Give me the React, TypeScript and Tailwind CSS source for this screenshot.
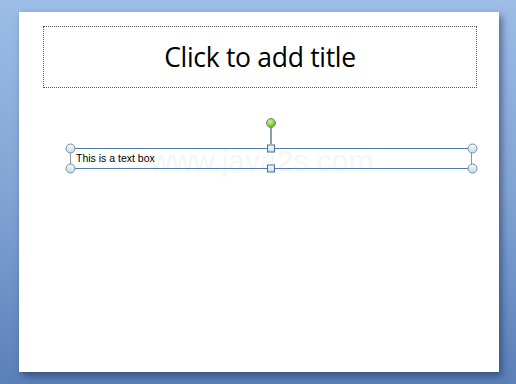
import React from "react";

function Circle({ cx, cy }: { cx: number; cy: number }) {
  return (
    <g>
      <circle cx={cx} cy={cy} r={4.5} fill="url(#hg)" stroke="#7c8a98" strokeWidth={1} />
    </g>
  );
}

function Square({ x, y }: { x: number; y: number }) {
  return <rect x={x - 3.5} y={y - 3.5} width={7} height={7} fill="url(#sg)" stroke="#4d6f96" strokeWidth={1} />;
}

export default function App() {
  return (
    <div
      className="w-[516px] h-[384px] overflow-hidden bg-[linear-gradient(180deg,#9dbde8_0%,#82a4d4_50%,#5a80b8_100%)] pt-[12px] pl-[19px]"
      style={{ fontFamily: '"Liberation Sans", Arial, sans-serif' }}
    >
      <div className="relative w-[480px] h-[360px] bg-white shadow-[3px_4px_7px_rgba(20,40,80,0.55)]">
        <div
          className="absolute left-[131px] top-[134px] text-[30px] leading-none text-[#f6f6f6] select-none"
          style={{ fontFamily: '"Liberation Sans", Arial, sans-serif' }}
        >
          www.java2s.com
        </div>
        <div className="relative ml-[24px] pt-[14px]">
          <div className="w-[434px] h-[62px] border border-dotted border-[#555] flex items-center justify-center">
            <span
              className="text-[26.5px] text-black leading-none"
              style={{ fontFamily: '"Open Sans", "Liberation Sans", sans-serif', letterSpacing: "-0.3px" }}
            >
              Click to add title
            </span>
          </div>
        </div>
        <div className="relative ml-[51px] mt-[60px] w-[402px] h-[21px] border-y border-[#4f7bb0] border-x border-x-[#8696a6]">
          <div className="pl-[5px] pt-[3px] text-[10.5px] leading-[12px] text-black" style={{ fontFamily: '"Liberation Sans", Arial, sans-serif' }}>
            This is a text box
          </div>
          <svg className="absolute left-[-7px] top-[-33px] overflow-visible" width={414} height={60}>
            <defs>
              <linearGradient id="hg" x1="0" y1="0" x2="0" y2="1">
                <stop offset="0" stopColor="#f4fbfd" />
                <stop offset="0.5" stopColor="#d8eef5" />
                <stop offset="1" stopColor="#bfe0ea" />
              </linearGradient>
              <linearGradient id="sg" x1="0" y1="0" x2="0" y2="1">
                <stop offset="0" stopColor="#f0fafd" />
                <stop offset="1" stopColor="#c2e4ee" />
              </linearGradient>
              <radialGradient id="gg" cx="0.4" cy="0.35" r="0.7">
                <stop offset="0" stopColor="#c8f59a" />
                <stop offset="0.6" stopColor="#7fd43a" />
                <stop offset="1" stopColor="#55a820" />
              </radialGradient>
            </defs>
            <line x1={207} y1={10} x2={207} y2={28} stroke="#8e9cab" strokeWidth={2} />
            <circle cx={207} cy={7} r={4.5} fill="url(#gg)" stroke="#7a8a80" strokeWidth={1} />
            <Circle cx={6.5} cy={32.5} />
            <Circle cx={6.5} cy={52.5} />
            <Circle cx={408.5} cy={32.5} />
            <Circle cx={408.5} cy={52.5} />
            <Square x={207} y={32.5} />
            <Square x={207} y={52.5} />
          </svg>
        </div>
      </div>
    </div>
  );
}
